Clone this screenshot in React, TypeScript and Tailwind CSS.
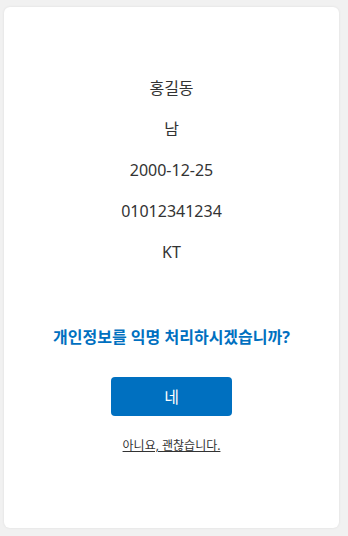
export default function App() {
  const info = ["홍길동", "남", "2000-12-25", "01012341234", "KT"];

  return (
    <div
      className="min-h-[536px] bg-[#f1f1f1] pl-[4px] pr-[9px] pt-[7px] pb-[8px]"
      style={{ fontFamily: '"Noto Sans", "Noto Sans CJK KR", sans-serif' }}
    >
      <div className="flex h-[521px] flex-col items-center rounded-[6px] bg-white pt-[69px] shadow-[0_0_3px_rgba(0,0,0,0.08)]">
        <div className="flex flex-col items-center gap-[17px] text-[16px] leading-[24px] text-[#333]">
          {info.map((v) => (
            <p key={v}>{v}</p>
          ))}
        </div>

        <p className="mt-[62px] text-[16px] font-bold leading-[22px] text-[#0070c0]">
          개인정보를 익명 처리하시겠습니까?
        </p>

        <button className="mt-[29px] h-[39px] w-[121px] rounded-[4px] bg-[#0070c0] text-[16px] text-white">
          네
        </button>

        <a className="mt-[21px] text-[12px] leading-[18px] text-[#333] underline">
          아니요, 괜찮습니다.
        </a>
      </div>
    </div>
  );
}
